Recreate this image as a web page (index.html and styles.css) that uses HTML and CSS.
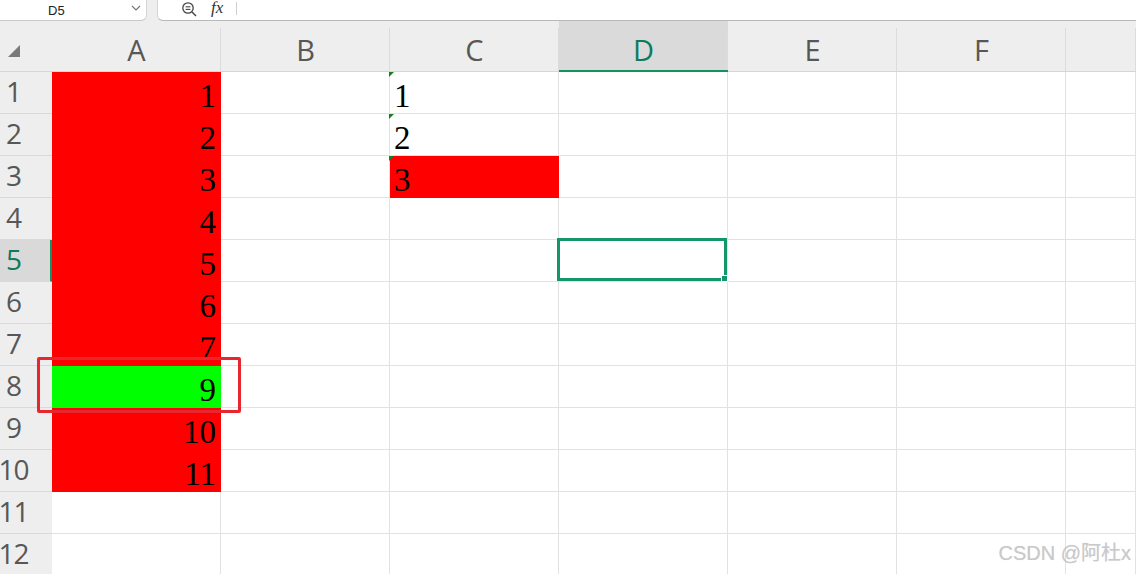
FILE: index.html
```html
<!DOCTYPE html>
<html lang="en">
<head>
    <meta charset="UTF-8">
    <meta name="viewport" content="width=device-width, initial-scale=1.0">
    <title>sheet</title>
    <link rel="stylesheet" href="styles.css">
</head>
<body>
    <div class="topbar">
        <div class="namebox">
            <span class="name">D5</span>
            <svg class="chev" width="10" height="6" viewBox="0 0 10 6"><polyline points="1,1 5,5 9,1" fill="none" stroke="#777" stroke-width="1.2"/></svg>
        </div>
        <div class="formula">
            <svg class="zoom" width="18" height="16" viewBox="0 0 18 16">
                <circle cx="7" cy="7" r="5.2" fill="none" stroke="#444" stroke-width="1.3"/>
                <line x1="11" y1="11" x2="15" y2="15" stroke="#444" stroke-width="1.4"/>
                <line x1="4.6" y1="5.8" x2="9.4" y2="5.8" stroke="#444" stroke-width="1.1"/>
                <line x1="4.6" y1="8.4" x2="9.4" y2="8.4" stroke="#444" stroke-width="1.1"/>
            </svg>
            <span class="fx">fx</span>
            <span class="sep"></span>
        </div>
    </div>

    <div class="sheet">
        <div class="corner"><span class="tri"></span></div>
        <div class="colhead">A</div>
        <div class="colhead">B</div>
        <div class="colhead">C</div>
        <div class="colhead on">D</div>
        <div class="colhead">E</div>
        <div class="colhead">F</div>
        <div class="colhead"></div>

        <div class="rowhead">1</div>
        <div class="cell red num">1</div><div class="cell"></div><div class="cell txt"><i class="flag"></i>1</div><div class="cell"></div><div class="cell"></div><div class="cell"></div><div class="cell"></div>

        <div class="rowhead">2</div>
        <div class="cell red num">2</div><div class="cell"></div><div class="cell txt"><i class="flag"></i>2</div><div class="cell"></div><div class="cell"></div><div class="cell"></div><div class="cell"></div>

        <div class="rowhead">3</div>
        <div class="cell red num">3</div><div class="cell"></div><div class="cell txt red"><i class="flag"></i>3</div><div class="cell"></div><div class="cell"></div><div class="cell"></div><div class="cell"></div>

        <div class="rowhead">4</div>
        <div class="cell red num">4</div><div class="cell"></div><div class="cell"></div><div class="cell"></div><div class="cell"></div><div class="cell"></div><div class="cell"></div>

        <div class="rowhead on">5</div>
        <div class="cell red num">5</div><div class="cell"></div><div class="cell"></div><div class="cell active"><span class="select"><i class="handle"></i></span></div><div class="cell"></div><div class="cell"></div><div class="cell"></div>

        <div class="rowhead">6</div>
        <div class="cell red num">6</div><div class="cell"></div><div class="cell"></div><div class="cell"></div><div class="cell"></div><div class="cell"></div><div class="cell"></div>

        <div class="rowhead">7</div>
        <div class="cell red num">7</div><div class="cell"></div><div class="cell"></div><div class="cell"></div><div class="cell"></div><div class="cell"></div><div class="cell"></div>

        <div class="rowhead">8</div>
        <div class="cell green num">9</div><div class="cell"></div><div class="cell"></div><div class="cell"></div><div class="cell"></div><div class="cell"></div><div class="cell"></div>

        <div class="rowhead">9</div>
        <div class="cell red num">10</div><div class="cell"></div><div class="cell"></div><div class="cell"></div><div class="cell"></div><div class="cell"></div><div class="cell"></div>

        <div class="rowhead">10</div>
        <div class="cell red num">11</div><div class="cell"></div><div class="cell"></div><div class="cell"></div><div class="cell"></div><div class="cell"></div><div class="cell"></div>

        <div class="rowhead">11</div>
        <div class="cell"></div><div class="cell"></div><div class="cell"></div><div class="cell"></div><div class="cell"></div><div class="cell"></div><div class="cell"></div>

        <div class="rowhead">12</div>
        <div class="cell"></div><div class="cell"></div><div class="cell"></div><div class="cell"></div><div class="cell"></div><div class="cell"></div><div class="cell"></div>

        <div class="mark"></div>
    </div>

    <div class="watermark">CSDN @阿杜x</div>
</body>
</html>
```

FILE: styles.css
```css
html, body {
    margin: 0;
    padding: 0;
}
body {
    width: 1136px;
    height: 574px;
    overflow: hidden;
    background: #fff;
    font-family: "Open Sans", "Liberation Sans", sans-serif;
    position: relative;
}

/* formula bar */
.topbar {
    display: flex;
    height: 21px;
    background: #eeeeee;
}
.namebox {
    width: 146px;
    height: 20px;
    background: #fff;
    border-right: 1px solid #d6d6d6;
    border-bottom: 1px solid #c8c8c8;
    border-bottom-right-radius: 6px;
    display: flex;
    align-items: center;
    position: relative;
}
.name {
    margin-left: 48px;
    font-size: 13px;
    color: #222;
    font-family: "Liberation Sans", sans-serif;
}
.chev {
    position: absolute;
    left: 131px;
    top: 5px;
}
.formula {
    flex: 1;
    margin-left: 10px;
    height: 20px;
    background: #fff;
    border-left: 1px solid #d6d6d6;
    border-bottom: 1px solid #b9b9b9;
    border-bottom-left-radius: 6px;
    display: flex;
    align-items: center;
}
.zoom {
    margin-left: 23px;
    margin-top: -2px;
}
.fx {
    margin-left: 12px;
    font-family: "Liberation Serif", serif;
    font-style: italic;
    font-size: 17px;
    color: #333;
    margin-top: -4px;
}
.sep {
    width: 1px;
    height: 13px;
    background: #cfcfcf;
    margin-left: 13px;
    margin-top: -4px;
}

/* grid */
.sheet {
    width: 1136px;
    display: grid;
    grid-template-columns: 52px repeat(6, 169px) 1fr;
    grid-template-rows: 51px;
    grid-auto-rows: 42px;
    position: relative;
}
.sheet > div {
    box-sizing: border-box;
}
.corner, .colhead {
    background: #eeeeee;
    border-bottom: 1px solid #d6d6d6;
    position: relative;
}
.colhead {
    display: flex;
    align-items: center;
    justify-content: center;
    padding-top: 7px;
    font-size: 29px;
    color: #575757;
}
.colhead::after {
    content: "";
    position: absolute;
    right: 0;
    top: 7px;
    bottom: 0;
    width: 1px;
    background: #dcdcdc;
}
.colhead.on {
    background: #dadada;
    color: #0e7b5a;
    border-bottom: 2px solid #12925f;
}
.tri {
    position: absolute;
    left: 8px;
    top: 24px;
    width: 0;
    height: 0;
    border-left: 12px solid transparent;
    border-bottom: 12px solid #7a7a7a;
}
.rowhead {
    background: #eeeeee;
    border-bottom: 1px solid #d9d9d9;
    font-size: 28px;
    letter-spacing: -1px;
    color: #575757;
    padding: 0 25px 4px 0;
    display: flex;
    align-items: center;
    justify-content: center;
    white-space: nowrap;
}
.rowhead.on {
    background: #d9d9d9;
    color: #0e7b5a;
    border-right: 2px solid #12925f;
    padding-right: 23px;
}
.cell {
    border-right: 1px solid #e2e2e2;
    border-bottom: 1px solid #e2e2e2;
    position: relative;
    font-family: "Liberation Serif", serif;
    font-size: 33px;
    line-height: 1;
    color: #000;
    display: flex;
    align-items: flex-end;
}
.num {
    justify-content: flex-end;
    padding-right: 4px;
}
.txt {
    padding-left: 4px;
}
.red {
    background: #ff0000;
    border-color: #ff0000;
}
.green {
    background: #00ff00;
    border-color: #00ff00;
}
.flag {
    position: absolute;
    left: -1px;
    top: 0;
    width: 0;
    height: 0;
    border-top: 5px solid #1a7f1a;
    border-right: 5px solid transparent;
}

/* selection */
.select {
    position: absolute;
    left: -2px;
    top: -2px;
    right: 0;
    bottom: 0;
    border: 3px solid #12966a;
}
.handle {
    position: absolute;
    right: -4px;
    bottom: -4px;
    width: 5px;
    height: 5px;
    background: #12966a;
    border: 1px solid #fff;
}

/* annotation */
.mark {
    position: absolute;
    left: 37px;
    top: 336px;
    width: 204px;
    height: 56px;
    border: 3px solid #e8262f;
    border-radius: 2px;
    box-sizing: border-box;
}

.watermark {
    position: absolute;
    right: 5px;
    bottom: 8px;
    font-family: "Liberation Sans", "Noto Sans CJK SC", sans-serif;
    font-size: 20px;
    color: #c9c9c9;
    text-shadow: 0 0 1px rgba(0, 0, 0, 0.12);
}
```
